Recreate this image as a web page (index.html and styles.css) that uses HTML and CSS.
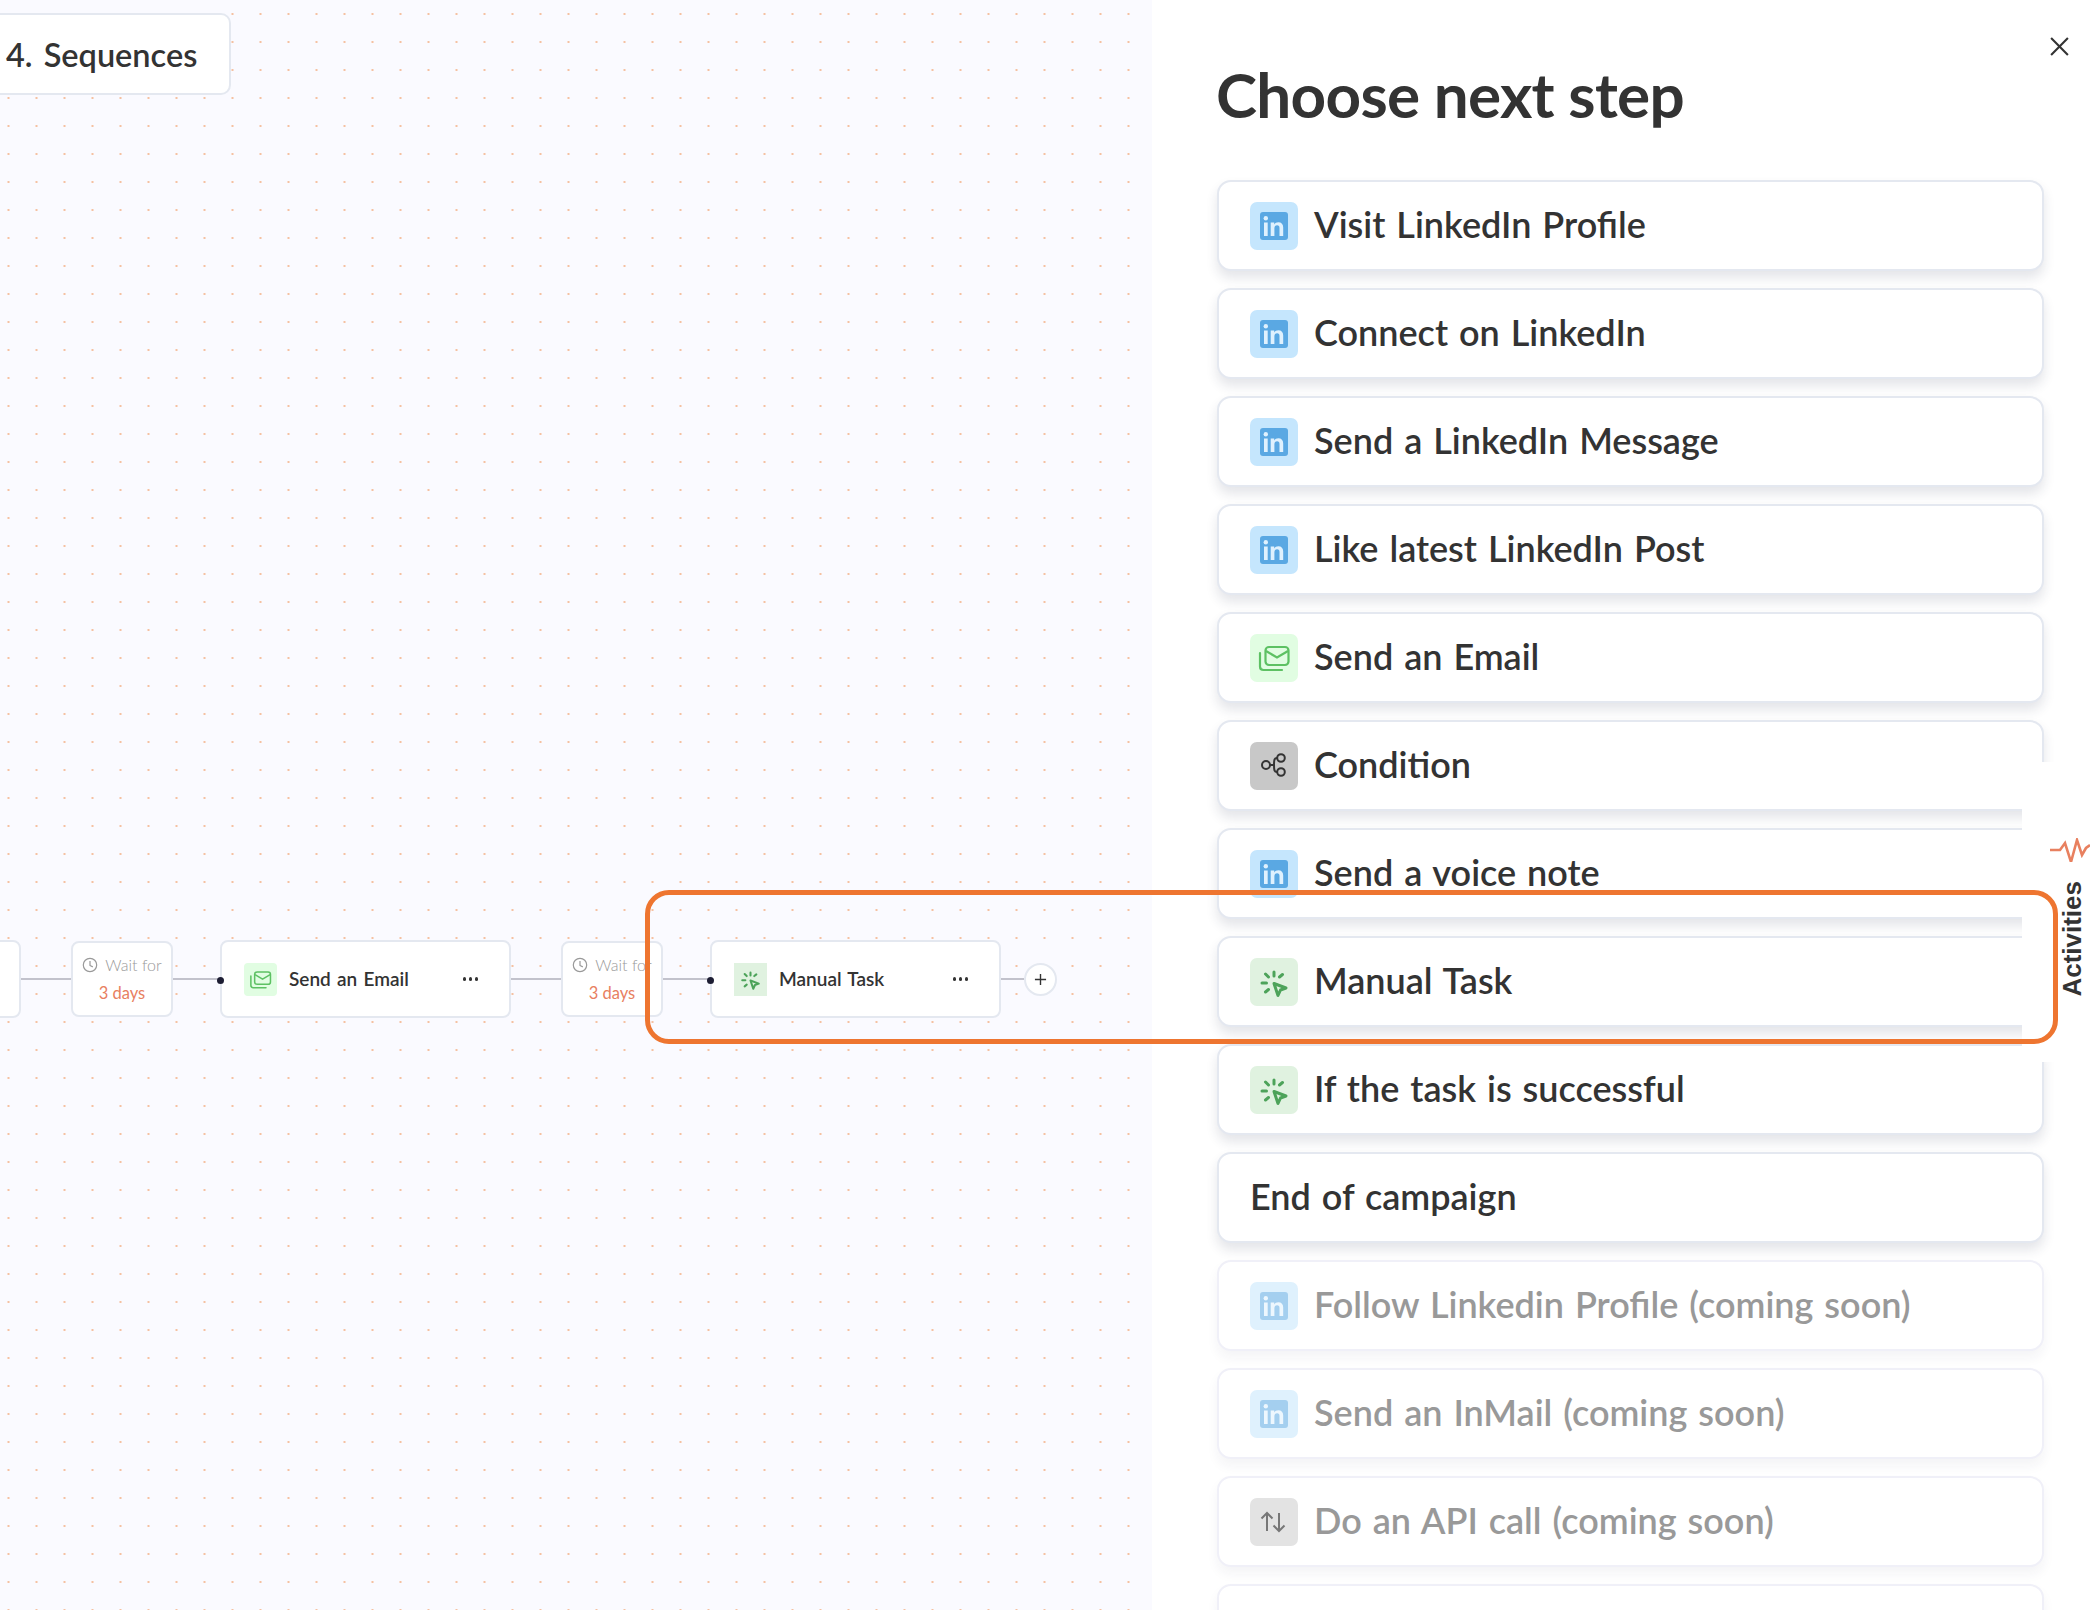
FILE: index.html
```html
<!DOCTYPE html>
<html lang="en">
<head>
<meta charset="utf-8">
<title>Choose next step</title>
<link rel="stylesheet" href="styles.css">
</head>
<body>
<svg class="defs" width="0" height="0" aria-hidden="true">
  <symbol id="i-in" viewBox="0 0 48 48">
    <rect x="10" y="10" width="28" height="28" rx="3" fill="#5aa8e3"/>
    <circle cx="15.8" cy="16.2" r="2.2" fill="#dff1fe"/>
    <rect x="14" y="20.5" width="3.7" height="13.5" fill="#dff1fe"/>
    <path d="M20.7 34V20.5h3.5v1.9c.9-1.4 2.3-2.2 4.1-2.2 3.2 0 4.9 2 4.9 5.4V34h-3.7v-8c0-1.8-.8-2.8-2.4-2.8-1.7 0-2.7 1.1-2.7 3V34z" fill="#dff1fe"/>
  </symbol>
  <symbol id="i-mail" viewBox="0 0 48 48">
    <rect x="15.5" y="13" width="23" height="18" rx="3.5" fill="none" stroke="#5dc163" stroke-width="2.2"/>
    <path d="M16 17l11 6.5L38 17" fill="none" stroke="#5dc163" stroke-width="2.2"/>
    <path d="M10 19v13.5c0 2 1.5 3.5 3.5 3.5H32" fill="none" stroke="#5dc163" stroke-width="2.2" stroke-linecap="round"/>
  </symbol>
  <symbol id="i-task" viewBox="0 0 48 48">
    <g fill="none" stroke="#4da35a" stroke-width="3" stroke-linecap="round" stroke-linejoin="round">
      <path d="M24 14v4M15.5 16l3 3M29.5 19l3-2.500M12 25h4.500M15.500 34l3-2.500"/>
      <path d="M24 25.500l12 4.500-5.500 2-2.500 5.500z"/>
    </g>
  </symbol>
  <symbol id="i-cond" viewBox="0 0 48 48">
    <g fill="none" stroke="#333" stroke-width="2">
      <circle cx="16" cy="23" r="4"/>
      <circle cx="31" cy="16" r="3.800"/>
      <circle cx="31" cy="30" r="3.800"/>
      <path d="M20 23h4M27 16c-2.500 0-3 1.500-3 7s.5 7 3 7"/>
    </g>
  </symbol>
  <symbol id="i-api" viewBox="0 0 48 48">
    <g fill="none" stroke="#777" stroke-width="2">
      <path d="M17 33V15M11.500 20.500L17 15l5.500 5.500"/>
      <path d="M29 15v18M23.500 27.500L29 33l5.500-5.500"/>
    </g>
  </symbol>
  <symbol id="i-clock" viewBox="0 0 16 16">
    <circle cx="8" cy="8" r="6.700" fill="none" stroke="#999" stroke-width="1.200"/>
    <path d="M8 4v4.500l2.800 1.400" fill="none" stroke="#999" stroke-width="1.200"/>
  </symbol>
</svg>

<main class="app">
  <section class="canvas">
    <div class="tag">4. Sequences</div>

    <div class="chain">
      <div class="node node-stub"></div>
      <span class="line line-a"></span>
      <div class="wait">
        <div class="wait-label"><svg class="clock"><use href="#i-clock"/></svg>Wait for</div>
        <div class="wait-days">3 days</div>
      </div>
      <span class="line line-b"></span>
      <div class="node">
        <span class="pin"></span>
        <span class="node-icon bg-mail"><svg><use href="#i-mail"/></svg></span>
        <span class="node-name">Send an Email</span>
        <span class="more"><i></i><i></i><i></i></span>
      </div>
      <span class="line line-c"></span>
      <div class="wait">
        <div class="wait-label"><svg class="clock"><use href="#i-clock"/></svg>Wait for</div>
        <div class="wait-days">3 days</div>
      </div>
      <span class="line line-d"></span>
      <div class="node">
        <span class="pin"></span>
        <span class="node-icon bg-task square"><svg><use href="#i-task"/></svg></span>
        <span class="node-name">Manual Task</span>
        <span class="more"><i></i><i></i><i></i></span>
      </div>
      <span class="line line-e"></span>
      <div class="plus">
        <svg viewBox="0 0 14 14"><path d="M7 1v12M1 7h12" stroke="#333" stroke-width="1.500" fill="none"/></svg>
      </div>
    </div>
  </section>

  <aside class="panel">
    <svg class="close" viewBox="0 0 20 20"><path d="M2 2l16 16M18 2L2 18" stroke="#333" stroke-width="2" fill="none"/></svg>
    <h1 class="title">Choose next step</h1>
    <ul class="steps">
      <li class="step"><span class="icon bg-in"><svg><use href="#i-in"/></svg></span><span class="step-name">Visit LinkedIn Profile</span></li>
      <li class="step"><span class="icon bg-in"><svg><use href="#i-in"/></svg></span><span class="step-name">Connect on LinkedIn</span></li>
      <li class="step"><span class="icon bg-in"><svg><use href="#i-in"/></svg></span><span class="step-name">Send a LinkedIn Message</span></li>
      <li class="step"><span class="icon bg-in"><svg><use href="#i-in"/></svg></span><span class="step-name">Like latest LinkedIn Post</span></li>
      <li class="step"><span class="icon bg-mail"><svg><use href="#i-mail"/></svg></span><span class="step-name">Send an Email</span></li>
      <li class="step"><span class="icon bg-cond"><svg><use href="#i-cond"/></svg></span><span class="step-name">Condition</span></li>
      <li class="step"><span class="icon bg-in"><svg><use href="#i-in"/></svg></span><span class="step-name">Send a voice note</span></li>
      <li class="step"><span class="icon bg-task"><svg><use href="#i-task"/></svg></span><span class="step-name">Manual Task</span></li>
      <li class="step"><span class="icon bg-task"><svg><use href="#i-task"/></svg></span><span class="step-name">If the task is successful</span></li>
      <li class="step"><span class="step-name">End of campaign</span></li>
      <li class="step soon"><span class="icon bg-in"><svg><use href="#i-in"/></svg></span><span class="step-name">Follow Linkedin Profile (coming soon)</span></li>
      <li class="step soon"><span class="icon bg-in"><svg><use href="#i-in"/></svg></span><span class="step-name">Send an InMail (coming soon)</span></li>
      <li class="step soon"><span class="icon bg-cond"><svg><use href="#i-api"/></svg></span><span class="step-name">Do an API call (coming soon)</span></li>
      <li class="step soon"></li>
    </ul>
  </aside>

  <div class="activities">
    <svg class="pulse" viewBox="0 0 40 24"><path d="M0 12h10l5-7 6 19 6-22 5 15 4-7 4-3" fill="none" stroke="#e8805f" stroke-width="2.600"/></svg>
    <span class="activities-label">Activities</span>
  </div>

  <div class="highlight"></div>
</main>
</body>
</html>
```
FILE: styles.css
```css
* { box-sizing: border-box; }
html, body { margin: 0; padding: 0; height: 100%; overflow: hidden; }
body { font-family: "Lato", "Liberation Sans", sans-serif; color: #333; background: #fff; }
.defs { position: absolute; }

.app { position: relative; display: flex; width: 2090px; height: 1610px; overflow: hidden; }

.canvas {
  position: relative;
  flex: 0 0 1152px;
  background-color: #fafaff;
  background-image: radial-gradient(circle, #f3a878 0.6px, transparent 0.95px);
  background-size: 28px 28px;
  background-position: -5.500px 0;
}
.tag {
  position: absolute;
  left: -20px; top: 13px;
  width: 251px; height: 82px;
  padding-left: 24px;
  display: flex; align-items: center;
  background: #fff;
  border: 2px solid #e4e8f0;
  border-radius: 10px;
  font-size: 32.500px; font-weight: 600; word-spacing: 3px;
}

.chain { position: absolute; left: -100px; top: 940px; display: flex; align-items: center; height: 78px; }
.node {
  position: relative;
  display: flex; align-items: center;
  flex: none;
  width: 291px; height: 78px;
  padding-left: 22px;
  background: #fff;
  border: 2px solid #e4e8f0;
  border-radius: 8px;
}
.node-stub { width: 121px; }
.pin { position: absolute; left: -5px; top: 35px; width: 7px; height: 7px; border-radius: 50%; background: #1d1d33; }
.node-icon { display: flex; flex: none; width: 33px; height: 33px; border-radius: 4px; }
.node-icon svg { width: 33px; height: 33px; }
.node-icon.square { border-radius: 0; }
.node-name { margin: -1px 0 0 12px; font-size: 19px; font-weight: 600; word-spacing: 1.500px; white-space: nowrap; }
.more { position: absolute; right: 31px; top: 35px; display: flex; gap: 2.500px; }
.more i { width: 3.500px; height: 3.500px; border-radius: 50%; background: #333; }

.line { height: 2px; background: #c2c2cc; flex: none; }
.line-a { width: 50px; }
.line-b { width: 47px; }
.line-c { width: 50px; }
.line-d { width: 47px; }
.line-e { width: 23px; }

.wait {
  flex: none;
  width: 102px; height: 76px;
  background: #fff;
  border: 2px solid #e4e8f0;
  border-radius: 8px;
  display: flex; flex-direction: column; align-items: center; justify-content: center; gap: 9px;
}
.wait-label { display: flex; align-items: center; gap: 7px; font-size: 16px; font-weight: 300; color: #999; white-space: nowrap; }
.clock { width: 16px; height: 16px; }
.wait-days { font-size: 16.500px; color: #e8805f; }

.plus {
  flex: none;
  display: flex; align-items: center; justify-content: center;
  width: 33px; height: 33px;
  background: #fff;
  border: 2px solid #e4e8f0;
  border-radius: 50%;
}
.plus svg { width: 13px; height: 13px; }

.panel { position: relative; flex: 1; padding: 55px 46px 0 64px; background: #fff; }
.close { position: absolute; right: 20px; top: 36px; width: 21px; height: 21px; }
.title { margin: 0; height: 70px; font-size: 62px; line-height: 78px; font-weight: 700; letter-spacing: -.7px; white-space: nowrap; }
.steps { list-style: none; margin: 0; padding: 0; position: absolute; top: 180px; left: 65px; width: 827px; display: flex; flex-direction: column; gap: 17px; }
.step {
  flex: none;
  display: flex; align-items: center; gap: 16px;
  height: 91px;
  padding-left: 31px;
  background: #fff;
  border: 2px solid #e4e8f0;
  border-radius: 14px;
  box-shadow: 0 7px 12px rgba(30, 40, 70, .12);
  font-size: 36px; font-weight: 600; word-spacing: 2px;
  white-space: nowrap;
}
.step-name { margin-top: -3px; }
.soon { color: #999; border-color: #f0f0f8; box-shadow: 0 7px 12px rgba(30, 40, 70, .05); }
.soon .icon { opacity: .55; }
.soon .bg-cond { opacity: 1; background: #e3e3e3; }
.icon { display: flex; flex: none; width: 48px; height: 48px; border-radius: 7px; }
.icon svg { width: 48px; height: 48px; }

.bg-in { background: #c5e6fd; }
.bg-mail { background: #e1fde2; }
.bg-task { background: #e0f2e0; }
.bg-cond { background: #c8c8c8; }

.activities {
  position: absolute;
  left: 2022px; top: 762px;
  width: 68px; height: 300px;
  background: #fff;
}
.pulse { position: absolute; left: 28px; top: 76px; width: 40px; height: 24px; }
.activities-label {
  position: absolute;
  left: 36px; top: 119px;
  writing-mode: vertical-rl;
  transform: rotate(180deg);
  font-family: "Liberation Sans", sans-serif;
  font-size: 26px; line-height: 28px; font-weight: 700;
  white-space: nowrap;
}

.highlight {
  position: absolute;
  left: 645px; top: 890px;
  width: 1413px; height: 154px;
  border: 5px solid #ee7530;
  border-radius: 24px;
}
```
